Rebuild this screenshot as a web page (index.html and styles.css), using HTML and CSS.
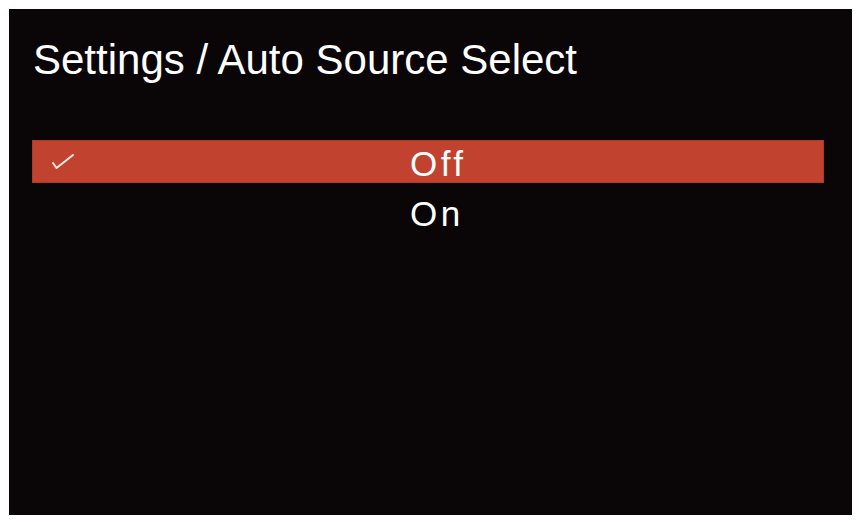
FILE: index.html
```html
<!DOCTYPE html>
<html>
<head>
<meta charset="utf-8">
<link rel="stylesheet" href="styles.css">
</head>
<body>
<div class="screen">
  <h1 class="title">Settings / Auto Source Select</h1>
  <ul class="options">
    <li class="option selected">
      <svg class="check" width="26" height="20" viewBox="0 0 26 20"><polyline points="2,12 5.5,17 22,4" fill="none" stroke="#f8e8e2" stroke-width="2" stroke-linecap="round" stroke-linejoin="round"/></svg>
      <span class="label">Off</span>
    </li>
    <li class="option">
      <span class="label">On</span>
    </li>
  </ul>
</div>
</body>
</html>
```

FILE: styles.css
```css
html, body {
  margin: 0;
  padding: 0;
  background: #ffffff;
}
.screen {
  margin: 9px;
  width: 843px;
  height: 506px;
  box-sizing: border-box;
  background: #0a0506;
  padding: 30px 28px 0 23px;
  font-family: "Liberation Sans", Arial, sans-serif;
  color: #ffffff;
}
.title {
  margin: 0 0 0 1px;
  font-size: 42px;
  line-height: 42px;
  font-weight: normal;
}
.options {
  list-style: none;
  margin: 59px 0 0 0;
  padding: 0;
  display: flex;
  flex-direction: column;
  gap: 7px;
}
.option {
  position: relative;
  height: 43px;
  box-sizing: border-box;
  padding: 5px 0 0 378px;
  font-size: 35px;
  line-height: 37px;
  letter-spacing: 3.5px;
}
.option.selected {
  background: #c1432f;
  box-shadow: inset 0 0 0 1px #b03a28;
}
.check {
  position: absolute;
  left: 19px;
  top: 11px;
}
```
